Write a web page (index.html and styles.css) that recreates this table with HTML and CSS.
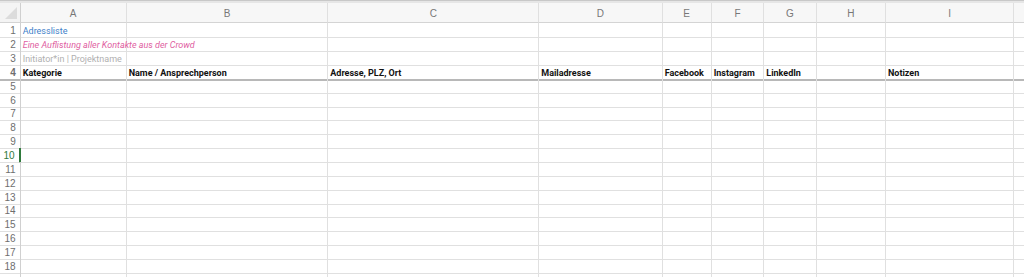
FILE: index.html
```html
<!DOCTYPE HTML>
<html>
<head>
    <meta charset="utf-8">
    <link rel="stylesheet" href="styles.css">
</head>
<body>
    <div class="sheet">
        <div class="toolbar-edge"></div>

        <div class="row head">
            <div class="num corner"><span class="tri"></span></div>
            <div>A</div><div>B</div><div>C</div><div>D</div><div>E</div>
            <div>F</div><div>G</div><div>H</div><div>I</div><div></div>
        </div>

        <div class="row">
            <div class="num">1</div>
            <div class="title">Adressliste</div><div></div><div></div><div></div><div></div>
            <div></div><div></div><div></div><div></div><div></div>
        </div>
        <div class="row">
            <div class="num">2</div>
            <div class="subtitle">Eine Auflistung aller Kontakte aus der Crowd</div><div></div><div></div><div></div><div></div>
            <div></div><div></div><div></div><div></div><div></div>
        </div>
        <div class="row">
            <div class="num">3</div>
            <div class="muted">Initiator*in | Projektname</div><div></div><div></div><div></div><div></div>
            <div></div><div></div><div></div><div></div><div></div>
        </div>
        <div class="row labels frozen">
            <div class="num">4</div>
            <div>Kategorie</div><div>Name / Ansprechperson</div><div>Adresse, PLZ, Ort</div><div>Mailadresse</div><div>Facebook</div>
            <div>Instagram</div><div>LinkedIn</div><div></div><div>Notizen</div><div></div>
        </div>

        <div class="row"><div class="num">5</div><div></div><div></div><div></div><div></div><div></div><div></div><div></div><div></div><div></div><div></div></div>
        <div class="row"><div class="num">6</div><div></div><div></div><div></div><div></div><div></div><div></div><div></div><div></div><div></div><div></div></div>
        <div class="row"><div class="num">7</div><div></div><div></div><div></div><div></div><div></div><div></div><div></div><div></div><div></div><div></div></div>
        <div class="row"><div class="num">8</div><div></div><div></div><div></div><div></div><div></div><div></div><div></div><div></div><div></div><div></div></div>
        <div class="row"><div class="num">9</div><div></div><div></div><div></div><div></div><div></div><div></div><div></div><div></div><div></div><div></div></div>
        <div class="row"><div class="num active">10</div><div></div><div></div><div></div><div></div><div></div><div></div><div></div><div></div><div></div><div></div></div>
        <div class="row"><div class="num">11</div><div></div><div></div><div></div><div></div><div></div><div></div><div></div><div></div><div></div><div></div></div>
        <div class="row"><div class="num">12</div><div></div><div></div><div></div><div></div><div></div><div></div><div></div><div></div><div></div><div></div></div>
        <div class="row"><div class="num">13</div><div></div><div></div><div></div><div></div><div></div><div></div><div></div><div></div><div></div><div></div></div>
        <div class="row"><div class="num">14</div><div></div><div></div><div></div><div></div><div></div><div></div><div></div><div></div><div></div><div></div></div>
        <div class="row"><div class="num">15</div><div></div><div></div><div></div><div></div><div></div><div></div><div></div><div></div><div></div><div></div></div>
        <div class="row"><div class="num">16</div><div></div><div></div><div></div><div></div><div></div><div></div><div></div><div></div><div></div><div></div></div>
        <div class="row"><div class="num">17</div><div></div><div></div><div></div><div></div><div></div><div></div><div></div><div></div><div></div><div></div></div>
        <div class="row"><div class="num">18</div><div></div><div></div><div></div><div></div><div></div><div></div><div></div><div></div><div></div><div></div></div>
        <div class="row"><div class="num"></div><div></div><div></div><div></div><div></div><div></div><div></div><div></div><div></div><div></div><div></div></div>
    </div>
</body>
</html>
```

FILE: styles.css
```css
body {
    margin: 0;
    padding: 0;
    background-color: #FFFFFF;
    overflow: hidden;
}

.sheet {
    width: 1024px;
    height: 277px;
    overflow: hidden;
    font-family: Roboto, "Liberation Sans", sans-serif;
    font-size: 9px;
    color: #111111;
}

.toolbar-edge {
    height: 3px;
    box-sizing: border-box;
    background-color: #e6e6e6;
    border-top: 1px solid #c8c8c8;
}

.row {
    display: grid;
    grid-template-columns: 20.7px 106px 201.6px 211px 123.4px 49px 52.6px 52.4px 69.3px 128.3px 60px;
    height: 13.86px;
    width: 1074px;
}

.row > div {
    box-sizing: border-box;
    border-right: 1px solid #e0e0e0;
    border-bottom: 1px solid #e0e0e0;
    padding: 2px 2px 0;
    line-height: 12px;
    white-space: nowrap;
    overflow: visible;
}

.row > .num {
    padding: 2px 4px 0 0;
    text-align: right;
    font-family: "Liberation Sans", Arial, sans-serif;
    font-size: 10px;
    color: #6e6e6e;
    border-right-color: #d0d0d0;
}

.row > .num.active {
    color: #2f7a3c;
    border-right: 2px solid #2f7a3c;
}

/* column letters */
.head {
    height: 20.3px;
    background-color: #f7f7f7;
}

.head > div {
    padding: 3px 0 0;
    text-align: center;
    font-family: "Liberation Sans", Arial, sans-serif;
    font-size: 10px;
    color: #777777;
    line-height: 16px;
    border-bottom-color: #d4d4d4;
}

.head > .corner {
    position: relative;
    background-color: #f4f4f4;
}

.corner .tri {
    position: absolute;
    right: 3px;
    bottom: 3px;
    width: 0;
    height: 0;
    border-left: 12px solid transparent;
    border-bottom: 12px solid #dcdcdc;
}

.title {
    color: #3f7fc9;
}

.subtitle {
    color: #e0609f;
    font-style: italic;
}

.muted {
    color: #b0b0b0;
}

.labels > div {
    font-weight: bold;
}

.frozen > div {
    border-bottom: 2px solid #b8b8b8;
}
```
